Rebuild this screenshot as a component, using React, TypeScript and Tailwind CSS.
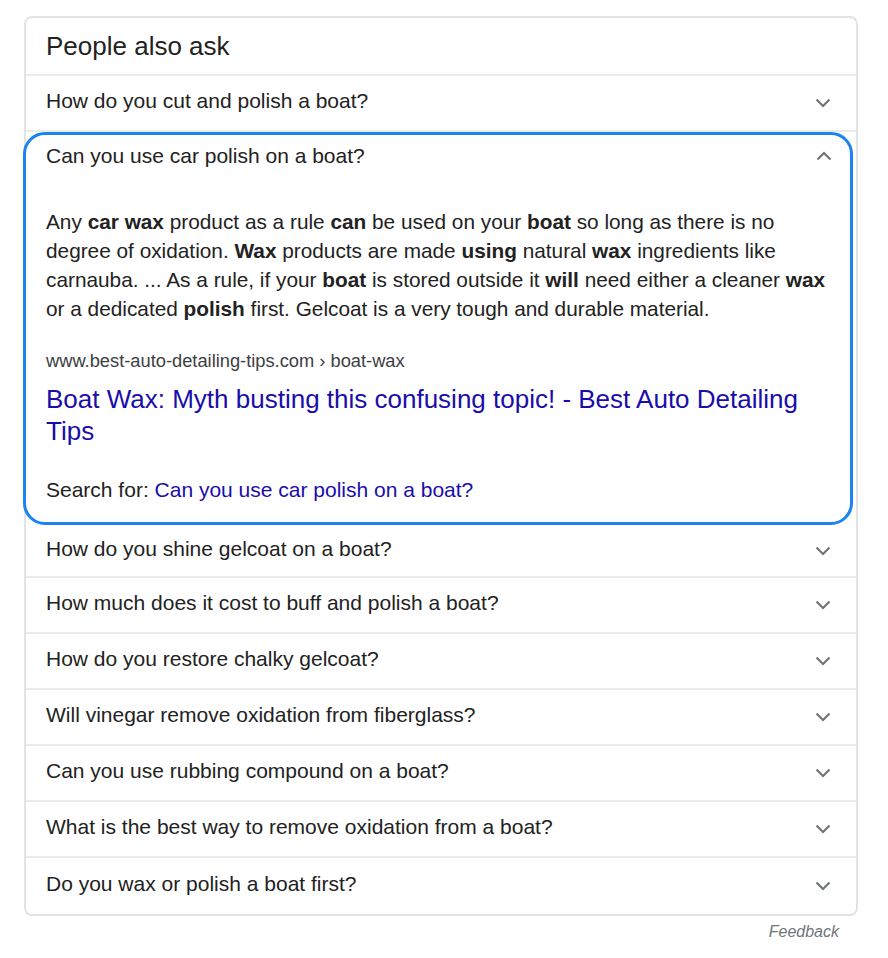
const before = ["How do you cut and polish a boat?"];
const after = [
  "How do you shine gelcoat on a boat?",
  "How much does it cost to buff and polish a boat?",
  "How do you restore chalky gelcoat?",
  "Will vinegar remove oxidation from fiberglass?",
  "Can you use rubbing compound on a boat?",
  "What is the best way to remove oxidation from a boat?",
  "Do you wax or polish a boat first?",
];

function Chevron({ up }: { up?: boolean }) {
  return (
    <svg width="16" height="10" viewBox="0 0 16 10" className="text-[#70757a]">
      <path
        d={up ? "M1.5 8.5 L8 2 L14.5 8.5" : "M1.5 1.5 L8 8 L14.5 1.5"}
        fill="none"
        stroke="currentColor"
        strokeWidth="2.2"
      />
    </svg>
  );
}

function Row({ q, h, last }: { q: string; h: string; last?: boolean }) {
  return (
    <div
      className={`flex items-center justify-between pl-5 pr-[25px] ${h} ${
        last ? "" : "border-b-2 border-[#ebebeb]"
      }`}
    >
      <span className="text-[21px] leading-6 text-[#222222] pb-1">{q}</span>
      <Chevron />
    </div>
  );
}

export default function App() {
  return (
    <div className="min-h-screen bg-white font-['Liberation_Sans',Arial,sans-serif] pt-4 pl-6 w-[888px]">
      <div className="w-[834px] border-2 border-[#e3e3e3] rounded-lg bg-white">
        <div className="h-[58px] flex items-center pl-5 border-b-2 border-[#ebebeb]">
          <h2 className="text-[26px] leading-8 text-[#222222]">People also ask</h2>
        </div>
        {before.map((q) => (
          <Row key={q} q={q} h="h-[56px]" />
        ))}

        <div className="-ml-[3px] mr-[3px] border-[3px] border-[#1b84f2] rounded-[22px] bg-white">
          <div className="flex items-center justify-between h-[42px] pl-5 pr-[18px]">
            <span className="text-[21px] leading-6 text-[#222222]">
              Can you use car polish on a boat?
            </span>
            <Chevron up />
          </div>
          <div className="px-5 pb-5">
            <p className="mt-[30px] text-[20.8px] leading-[29px] text-[#222222] whitespace-nowrap">
              Any <b>car wax</b> product as a rule <b>can</b> be used on your <b>boat</b> so long as there is no
              <br />
              degree of oxidation. <b>Wax</b> products are made <b>using</b> natural <b>wax</b> ingredients like
              <br />
              carnauba. ... As a rule, if your <b>boat</b> is stored outside it <b>will</b> need either a cleaner <b>wax</b>
              <br />
              or a dedicated <b>polish</b> first. Gelcoat is a very tough and durable material.
            </p>
            <div className="mt-[28px] text-[18.3px] leading-5 text-[#3c4043]">
              www.best-auto-detailing-tips.com › boat-wax
            </div>
            <a className="block mt-3 text-[26px] leading-8 text-[#1a0dab] whitespace-nowrap">
              Boat Wax: Myth busting this confusing topic! - Best Auto Detailing
              <br />
              Tips
            </a>
            <div className="mt-[31px] text-[21px] leading-6 text-[#222222]">
              Search for: <a className="text-[#1a0dab]">Can you use car polish on a boat?</a>
            </div>
          </div>
        </div>

        {after.map((q, i) => (
          <Row
            key={q}
            q={q}
            h={i === 0 ? "h-[53px]" : "h-[56px]"}
            last={i === after.length - 1}
          />
        ))}
      </div>
      <div className="w-[834px] flex justify-end pr-[19px] mt-1">
        <span className="italic text-[16px] text-[#70757a]">Feedback</span>
      </div>
    </div>
  );
}
